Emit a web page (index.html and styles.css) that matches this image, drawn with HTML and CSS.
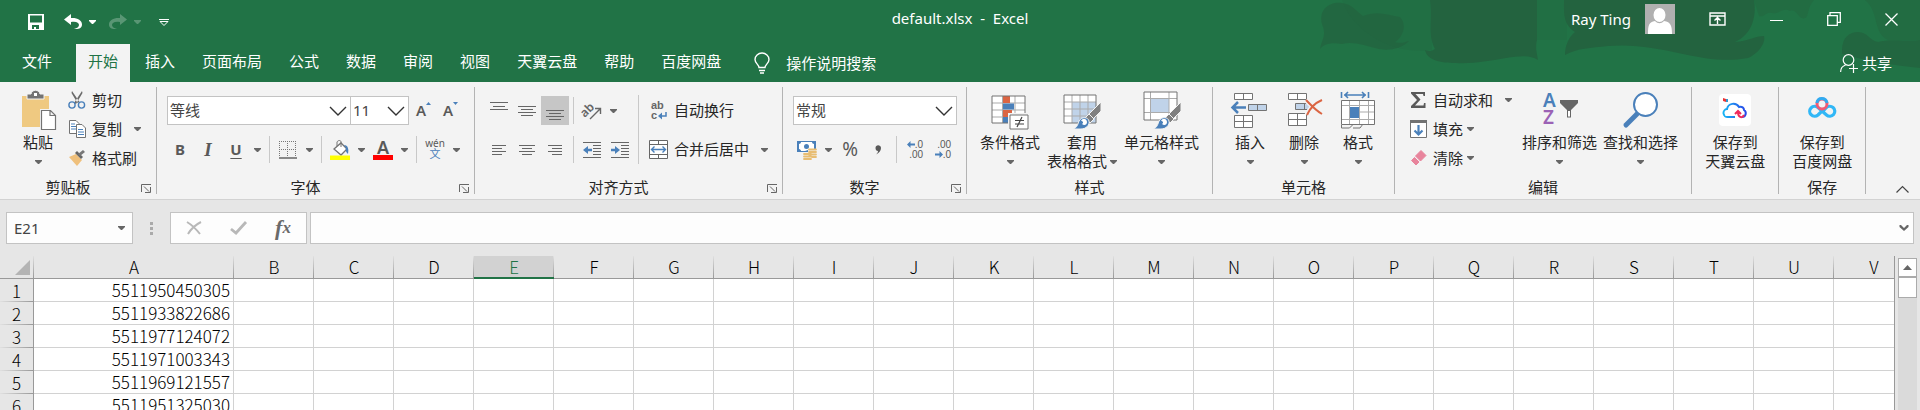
FILE: index.html
```html
<!DOCTYPE html>
<html lang="zh-CN">
<head>
<meta charset="utf-8">
<title>default.xlsx - Excel</title>
<link rel="stylesheet" href="styles.css">
</head>
<body>
<svg class="symbols" aria-hidden="true">
  <symbol id="caret" viewBox="0 0 7 4"><path d="M0 0h7v1L4 4H3L0 1z" fill="currentColor"/></symbol>
  <symbol id="chevron" viewBox="0 0 18 10"><path d="M1 1l8 8 8-8" fill="none" stroke="#333" stroke-width="1.4"/></symbol>
  <symbol id="launcher" viewBox="0 0 10 9"><path d="M.5 8V.5H10M3 2.500l5 5M9.500 3v5.500H4" fill="none" stroke="#666"/></symbol>
  <symbol id="brush" viewBox="0 0 28 28"><path d="M28 0v9l-8 8-5-4z" fill="#808080" stroke="#f3f3f3"/><path d="M16 12l5 5-4 4-5-5z" fill="#808080" stroke="#f3f3f3"/><path d="M0 27c4-1 5-5 6-8 3-5 9-4 10 0s-3 8-8 8z" fill="#4a80ba" stroke="#f3f3f3"/><path d="M8 19c2-4 6-2 6 1s-3 4-5 2c2-1 1-3-1-3z" fill="#fff"/></symbol>
</svg>

<header class="top">
  <svg class="art" viewBox="0 0 640 82" aria-hidden="true">
    <g fill="#23633f">
      <path opacity=".7" d="M40 49c2-10 6-13 3-22C36 8 52 1 62 3c10 1 14 8 21 13 14-6 26-1 37 1 8 9 2 21-5 25 8 2 9 0 14-1-8 8-20 10-30 8-14-3-25-8-37-5-11-2-18 0-22 5z"/>
      <path d="M145 50c4 2 7 1 10-1-8-15-2-30-5-49h107v40c-2 9 0 13 1 20-8-5-18-4-32-2-18 3-33 6-50 5-16 0-29-3-31-13z"/>
      <path d="M284 0h190c3 18-3 35-19 42 13-1 20-6 29-6 2 7-6 18-16 22-22 4-42 1-65-4-28-6-48-10-75-8-18 2-30 2-43 9 0-10 4-18 10-23-12-8-11-18-11-32z"/>
      <path opacity=".8" d="M562 50c0-13 8-18 16-18 10 0 12 9 20 10 12-4 30 0 42-2v28c-30-3-52-7-78-14z"/>
      <path opacity=".45" d="M474 0h60c-7 7-5 17-9 18-6 3-8-10-15-7-7-4-12 4-18 2s-8 5-13 3zM585 0h55v40h-32c-16-8-8-27-23-40z"/>
      <path opacity=".25" d="M62 0h90v50c-40 6-80-20-90-50zM257 0h30v40h-30z"/>
    </g>
  </svg>
  <div class="titlebar">
    <div class="qat">
      <button class="icon-btn" aria-label="保存"><svg width="16" height="16" viewBox="0 0 16 16"><path fill="#fff" fill-rule="evenodd" d="M0 0h16v16H0zM2 1.500v7h12v-7zM4 11v4h2v-2h2v2h3v-4z"/></svg></button>
      <button class="icon-btn undo" aria-label="撤消"><svg width="18" height="16" viewBox="0 0 18 16"><path d="M7 0L0 5.500 7 11V8c5-1 8 .5 8 3 0 2-2 3-5 4 5 .5 8-1 8-4.500C18 6 13 3.500 7 4z" fill="#fff"/></svg><svg class="caret light" width="7" height="4"><use href="#caret"/></svg></button>
      <button class="icon-btn redo" aria-label="恢复" disabled><svg width="18" height="16" viewBox="0 0 18 16"><path d="M11 0l7 5.500L11 11V8c-5-1-8 .5-8 3 0 2 2 3 5 4-5 .5-8-1-8-4.500C0 6 5 3.500 11 4z" fill="#fff"/></svg><svg class="caret light" width="7" height="4"><use href="#caret"/></svg></button>
      <button class="icon-btn customize" aria-label="自定义快速访问工具栏"><svg width="10" height="7" viewBox="0 0 10 7"><path d="M0 .5h10M1 2.500h8L5 6.500z" fill="none" stroke="#fff"/></svg></button>
    </div>
    <h1 class="doc-title">default.xlsx&nbsp; -&nbsp; Excel</h1>
    <div class="window-tools">
      <span class="user">Ray Ting</span>
      <svg class="avatar" width="30" height="30" viewBox="0 0 30 30" role="img" aria-label="用户头像"><path fill="#b0b0b0" d="M0 0h30v30H0z"/><ellipse cx="14.500" cy="11" rx="6" ry="7" fill="#fff"/><path d="M3 30c0-9 1-12 7-13 3 3 6 3 9 0 7 1 8 5 8 13z" fill="#fff"/></svg>
      <button class="icon-btn" aria-label="功能区显示选项"><svg width="17" height="14" viewBox="0 0 17 14"><path d="M1 1h15v12H1zM1 4h15M8.500 12V6M5.500 8.500l3-3 3 3" fill="none" stroke="#fff" stroke-width="1.400"/></svg></button>
      <button class="icon-btn" aria-label="最小化"><svg width="13" height="13" viewBox="0 0 13 13"><path d="M0 7.500h13" stroke="#fff"/></svg></button>
      <button class="icon-btn" aria-label="向下还原"><svg width="14" height="14" viewBox="0 0 14 14"><path d="M.7 3.700h9.600v9.600H.7zM3 3.500V.7h10.300v9.600H10.500" fill="none" stroke="#fff" stroke-width="1.300"/></svg></button>
      <button class="icon-btn" aria-label="关闭"><svg width="13" height="13" viewBox="0 0 13 13"><path d="M.5.5l12 12M12.500.5l-12 12" stroke="#fff" stroke-width="1.300"/></svg></button>
    </div>
  </div>
  <nav class="tabs">
    <a class="tab tab-file" href="#">文件</a>
    <a class="tab active" href="#" aria-current="page">开始</a>
    <a class="tab" href="#">插入</a>
    <a class="tab" href="#">页面布局</a>
    <a class="tab" href="#">公式</a>
    <a class="tab" href="#">数据</a>
    <a class="tab" href="#">审阅</a>
    <a class="tab" href="#">视图</a>
    <a class="tab" href="#">天翼云盘</a>
    <a class="tab" href="#">帮助</a>
    <a class="tab" href="#">百度网盘</a>
    <a class="tab tell-me" href="#"><svg width="16" height="21" viewBox="0 0 16 21"><path d="M5 14.500c0-3-4-4-4-8a7 6.500 0 0 1 14 0c0 4-4 5-4 8zM5 17.500h6M6 20h4" fill="none" stroke="#fff" stroke-width="1.400"/></svg>操作说明搜索</a>
    <a class="tab share" href="#"><svg width="18" height="19" viewBox="0 0 18 19"><circle cx="8.500" cy="6" r="5.300" fill="none" stroke="#fff" stroke-width="1.200"/><path d="M.6 18c0-4 2-6 5-7M9 14.500h9M13.500 10v9" fill="none" stroke="#fff" stroke-width="1.200"/></svg>共享</a>
  </nav>
</header>

<main class="ribbon">
  <section class="group clipboard">
    <div class="body">
      <button class="large paste"><svg width="36" height="40" viewBox="0 0 36 40"><path d="M2 6h27v31H2z" fill="#efc981"/><path d="M7 9V4h4c1-5 8-5 9 0h4v5z" fill="#737373" stroke="#f3f3f3"/><path d="M14 3h3v3h-3z" fill="#fff"/><path d="M20 19h11l5 5v15H20z" fill="#f3f3f3"/><path d="M21.500 20.500h9l5 5v14h-14zM30 20.500v5h5" fill="#fff" stroke="#737373" stroke-width="1.200"/></svg><span>粘贴</span><svg class="caret" width="7" height="4"><use href="#caret"/></svg></button>
      <div class="stack">
        <button class="small"><svg width="18" height="18" viewBox="0 0 18 18"><path d="M4 0l7.500 11-2 1L3.500 2zM14 0L6 12l2 1 6.500-11z" fill="#6a6a6a"/><circle cx="4" cy="14" r="3.100" fill="none" stroke="#4a80ba" stroke-width="1.400"/><circle cx="13.500" cy="14" r="3.100" fill="none" stroke="#4a80ba" stroke-width="1.400"/></svg>剪切</button>
        <button class="small wide"><svg width="18" height="18" viewBox="0 0 18 18"><path d="M1.500.5H8l3 3v10H1.500z" fill="#fff" stroke="#737373"/><path d="M8.500 4.500H14l3.500 3.500v9.500h-9z" fill="#fff" stroke="#737373"/><path d="M3 4h4M3 6.500h5M3 9h5M10 9.500h5M10 12h6M10 14.500h6" stroke="#4a80ba"/></svg>复制<svg class="caret" width="7" height="4"><use href="#caret"/></svg></button>
        <button class="small"><svg width="18" height="18" viewBox="0 0 18 18"><path d="M1 8l7-3 6 6-5 6z" fill="#efc07c"/><path d="M7 4l2-2 6 6-2 2z" fill="#666"/><path d="M10 5l5-4 2 2-5 4z" fill="#777"/></svg>格式刷</button>
      </div>
    </div>
    <div class="caption"><h2>剪贴板</h2><button class="launcher" aria-label="剪贴板设置"><svg width="10" height="9"><use href="#launcher"/></svg></button></div>
  </section>

  <section class="group font">
    <div class="body rows">
      <div class="row">
        <div class="combo combo-font"><select aria-label="字体"><option>等线</option></select><svg width="18" height="10"><use href="#chevron"/></svg></div>
        <div class="combo combo-size"><select aria-label="字号"><option>11</option></select><svg width="18" height="10"><use href="#chevron"/></svg></div>
        <button class="tool grow" aria-label="增大字号"><span class="letter">A</span><svg width="5" height="3" viewBox="0 0 5 3"><path d="M0 3L2.500 0 5 3z" fill="#4a80ba"/></svg></button>
        <button class="tool grow" aria-label="减小字号"><span class="letter">A</span><svg width="5" height="3" viewBox="0 0 5 3"><path d="M0 0l2.500 3L5 0z" fill="#4a80ba"/></svg></button>
      </div>
      <div class="row">
        <button class="tool bold" aria-label="加粗">B</button>
        <button class="tool italic" aria-label="倾斜">I</button>
        <button class="tool underline" aria-label="下划线">U</button>
        <button class="drop" aria-label="下划线选项"><svg class="caret" width="7" height="4"><use href="#caret"/></svg></button>
        <i class="sep"></i>
        <button class="tool" aria-label="边框"><svg width="18" height="18" viewBox="0 0 18 18"><path d="M0 .5h18M0 8.500h18M.5 0v16M8.500 0v16M16.500 0v16" stroke="#777" stroke-dasharray="1 1" fill="none"/><path d="M0 17h18" stroke="#666" stroke-width="1.500"/></svg></button>
        <button class="drop" aria-label="边框选项"><svg class="caret" width="7" height="4"><use href="#caret"/></svg></button>
        <i class="sep"></i>
        <button class="tool" aria-label="填充颜色"><svg width="20" height="20" viewBox="0 0 20 20"><path d="M4 9l7-6 6 6-6 6z" fill="#fff" stroke="#737373" stroke-width="1.300"/><path d="M7 6V2c1-2 4-2 4 0v5" fill="none" stroke="#737373"/><path d="M14 5c4 0 5 4 4 9-1-1-3-3-2-6z" fill="#4a80ba"/><path d="M0 15.500h20V20H0z" fill="#ff0"/></svg></button>
        <button class="drop" aria-label="填充颜色选项"><svg class="caret" width="7" height="4"><use href="#caret"/></svg></button>
        <button class="tool font-color" aria-label="字体颜色"><span>A</span></button>
        <button class="drop" aria-label="字体颜色选项"><svg class="caret" width="7" height="4"><use href="#caret"/></svg></button>
        <i class="sep"></i>
        <button class="tool pinyin" aria-label="拼音"><span>wén</span><span class="han">文</span></button>
        <button class="drop" aria-label="拼音选项"><svg class="caret" width="7" height="4"><use href="#caret"/></svg></button>
      </div>
    </div>
    <div class="caption"><h2>字体</h2><button class="launcher" aria-label="字体设置"><svg width="10" height="9"><use href="#launcher"/></svg></button></div>
  </section>

  <section class="group align">
    <div class="body">
      <div class="rows">
        <div class="row">
          <button class="tool" aria-label="顶端对齐"><svg width="18" height="18" viewBox="0 0 18 18"><path d="M0 .5h18M3 4.500h12M0 7.500h18" stroke="#666"/></svg></button>
          <button class="tool" aria-label="垂直居中"><svg width="18" height="18" viewBox="0 0 18 18"><path d="M0 4.500h18M3 7.500h12M0 10.500h18M3 13.500h12" stroke="#666"/></svg></button>
          <button class="tool pressed" aria-label="底端对齐" aria-pressed="true"><svg width="18" height="18" viewBox="0 0 18 18"><path d="M0 8.500h18M3 11.500h12M0 14.500h18M3 17.500h12" stroke="#666"/></svg></button>
          <i class="sep"></i>
          <button class="tool" aria-label="方向"><svg width="20" height="18" viewBox="0 0 20 18"><text class="svg-ab" transform="rotate(-45 7 9)" x="-1" y="11">ab</text><path d="M8 17L18 7M13 6.500h5.500V12" fill="none" stroke="#666" stroke-width="1.400"/></svg></button>
          <button class="drop" aria-label="方向选项"><svg class="caret" width="7" height="4"><use href="#caret"/></svg></button>
        </div>
        <div class="row">
          <button class="tool" aria-label="左对齐"><svg width="16" height="12" viewBox="0 0 16 12"><path d="M1 1.500h14M1 4.500h10M1 7.500h14M1 10.500h10" stroke="#666"/></svg></button>
          <button class="tool" aria-label="居中"><svg width="16" height="12" viewBox="0 0 16 12"><path d="M0 1.500h16M3 4.500h10M0 7.500h16M3 10.500h10" stroke="#666"/></svg></button>
          <button class="tool" aria-label="右对齐"><svg width="16" height="12" viewBox="0 0 16 12"><path d="M1 1.500h14M5 4.500h10M1 7.500h14M5 10.500h10" stroke="#666"/></svg></button>
          <i class="sep"></i>
          <button class="tool" aria-label="减少缩进量"><svg width="18" height="16" viewBox="0 0 18 16"><path d="M0 .5h18M10 3.500h8M10 6.500h8M10 9.500h8M10 12.500h8M0 15.500h18" stroke="#666"/><path d="M0 8l5-4v2.800h4v2.400H5V12z" fill="#4a80ba"/></svg></button>
          <button class="tool" aria-label="增加缩进量"><svg width="18" height="16" viewBox="0 0 18 16"><path d="M0 .5h18M10 3.500h8M10 6.500h8M10 9.500h8M10 12.500h8M0 15.500h18" stroke="#666"/><path d="M9 8L4 4v2.800H0v2.400h4V12z" fill="#4a80ba"/></svg></button>
        </div>
      </div>
      <i class="sep tall"></i>
      <div class="rows text-tools">
        <button class="row small"><svg width="19" height="19" viewBox="0 0 19 19"><text class="svg-abc" x="2" y="8">ab</text><text class="svg-abc" x="2" y="18">c</text><path d="M17 11v4h-4" fill="none" stroke="#4a80ba" stroke-width="1.500"/><path d="M9 15l4-3.500v7z" fill="#4a80ba"/></svg>自动换行</button>
        <button class="row small wide"><svg width="19" height="19" viewBox="0 0 19 19"><path d="M.5.500h18v18H.5z" fill="#fff" stroke="#666"/><path d="M0 4.500h19M0 14.500h19M9.500 0v4.500M9.500 14.500V19" stroke="#666"/><path d="M3 9.500h13M5.500 6.500l-3 3 3 3M13.500 6.500l3 3-3 3" fill="none" stroke="#4a80ba" stroke-width="1.400"/></svg>合并后居中<svg class="caret" width="7" height="4"><use href="#caret"/></svg></button>
      </div>
    </div>
    <div class="caption"><h2>对齐方式</h2><button class="launcher" aria-label="对齐设置"><svg width="10" height="9"><use href="#launcher"/></svg></button></div>
  </section>

  <section class="group number">
    <div class="body rows">
      <div class="row"><div class="combo combo-number"><select aria-label="数字格式"><option>常规</option></select><svg width="18" height="10"><use href="#chevron"/></svg></div></div>
      <div class="row">
        <button class="tool" aria-label="会计数字格式"><svg width="20" height="20" viewBox="0 0 20 20"><path d="M0 1h19v11H0z" fill="#4a80ba"/><path d="M2 4c1 0 2-1 2-2h11c0 1 1 2 2 2v5h-3l-6 2H4C4 10 3 9 2 9z" fill="#fff"/><circle cx="9.500" cy="6.500" r="2.500" fill="#4a80ba"/><path d="M11 9h8v8h-4v3H6v-7h5z" fill="#f3f3f3"/><path d="M12 9.500h7M12 12h7M12 14.500h7M15 17h4M7 14h7M7 16.500h7M7 19h7" stroke="#e8bd72" stroke-width="1.800" stroke-linecap="round"/></svg></button>
        <button class="drop" aria-label="会计格式选项"><svg class="caret" width="7" height="4"><use href="#caret"/></svg></button>
        <button class="tool percent" aria-label="百分比样式">%</button>
        <button class="tool comma" aria-label="千位分隔样式"><svg width="6" height="10" viewBox="0 0 6 10"><path d="M.5 3C.5-1 6-.5 6 3c0 3-2 5-5 6.500 1-1 2-2 2-3.500C1.500 6 .5 5 .5 3z" fill="#595959"/></svg></button>
        <i class="sep"></i>
        <button class="tool decimals" aria-label="增加小数位数"><span><svg width="8" height="7" viewBox="0 0 8 7"><path d="M0 3.500L3.500 0v2.500H8v2H3.500V7z" fill="#4a80ba"/></svg>.0</span><span>.00</span></button>
        <button class="tool decimals" aria-label="减少小数位数"><span>.00</span><span><svg width="8" height="7" viewBox="0 0 8 7"><path d="M8 3.500L4.500 0v2.500H0v2h4.500V7z" fill="#4a80ba"/></svg>.0</span></button>
      </div>
    </div>
    <div class="caption"><h2>数字</h2><button class="launcher" aria-label="数字设置"><svg width="10" height="9"><use href="#launcher"/></svg></button></div>
  </section>

  <section class="group styles">
    <div class="body">
      <button class="large"><svg width="38" height="40" viewBox="0 0 38 40"><path d="M1 6h33v27H1z" fill="#fff"/><path d="M1 13h33M1 20h33M1 27h33M11.500 6v27M24 6v27" stroke="#ababab"/><path d="M12 6h7v7h-7zM12 20h9v7h-9z" fill="#db6543"/><path d="M12 13.500h11v6H12zM12 27h7v6h-7z" fill="#4a80ba"/><path d="M1 6h33v27H1z" fill="none" stroke="#737373"/><path d="M17 23h21v17H17z" fill="#f3f3f3"/><path d="M19 25h18v14H19z" fill="#fff" stroke="#737373"/><path d="M24 30.500h9M24 34h9M31 27l-5 10" stroke="#444" stroke-width="1.200"/></svg><span>条件格式</span><svg class="caret" width="7" height="4"><use href="#caret"/></svg></button>
      <button class="large table-format"><svg width="38" height="40" viewBox="0 0 38 40"><path d="M1 5h32v28H1z" fill="#fff"/><path d="M9 12h24v21H9z" fill="#c0d3e9"/><path d="M1 12h32M1 19h32M1 26h32M9 5v28M17 5v28M25 5v28" stroke="#ababab"/><path d="M1 5h32v28H1z" fill="none" stroke="#737373"/><use href="#brush" x="10" y="12" width="28" height="28"/></svg><span>套用</span><span class="with-caret">表格格式<svg class="caret" width="7" height="4"><use href="#caret"/></svg></span></button>
      <button class="large"><svg width="38" height="40" viewBox="0 0 38 40"><path d="M1 2h33v28H1z" fill="#fff"/><path d="M8 9h18v13H8z" fill="#c0d3e9"/><path d="M1 8.500h33M1 22.500h33M7.500 2v28M26 2v28" stroke="#ababab"/><path d="M1 2h33v28H1z" fill="none" stroke="#737373"/><use href="#brush" x="10" y="12" width="28" height="28"/></svg><span>单元格样式</span><svg class="caret" width="7" height="4"><use href="#caret"/></svg></button>
    </div>
    <div class="caption"><h2>样式</h2></div>
  </section>

  <section class="group cells">
    <div class="body">
      <button class="large"><svg width="38" height="40" viewBox="0 0 38 40"><path d="M3.500 3.500h18v6h-18zM3.500 25.500h18v12h-18z" fill="#fff" stroke="#737373"/><path d="M12.500 3.500v6M12.500 25.500v12M3.500 31.500h18" stroke="#737373"/><path d="M17.500 14.500h18v6h-18zM26.500 14.500v6" fill="#c0d3e9" stroke="#737373"/><path d="M2 17.500h13M7 12l-5.500 5.500L7 23" fill="none" stroke="#4a80ba" stroke-width="2.500"/></svg><span>插入</span><svg class="caret" width="7" height="4"><use href="#caret"/></svg></button>
      <button class="large"><svg width="38" height="40" viewBox="0 0 38 40"><path d="M3.500 3.500h18v6h-18zM3.500 23.500h18v12h-18z" fill="#fff" stroke="#737373"/><path d="M12.500 3.500v6M12.500 23.500v12M3.500 29.500h18" stroke="#737373"/><path d="M10.500 13.500h16v6h-16zM19.500 13.500v6" fill="#c0d3e9" stroke="#737373"/><path d="M21 10c5 5 9 10 16 14M37 10c-7 3-12 8-15 15" fill="none" stroke="#f3f3f3" stroke-width="5"/><path d="M21 10c5 5 9 10 16 14M37 10c-7 3-12 8-15 15" fill="none" stroke="#db6543" stroke-width="2"/></svg><span>删除</span><svg class="caret" width="7" height="4"><use href="#caret"/></svg></button>
      <button class="large"><svg width="38" height="40" viewBox="0 0 38 40"><path d="M2.500 2v6M29.500 2v6M5 5h22M9 2L6 5l3 3M23 2l3 3-3 3" fill="none" stroke="#4a80ba" stroke-width="1.600"/><path d="M2.500 10.500h33v24h-33z" fill="#fff"/><path d="M2.500 15.500h33M2.500 29.500h33M10.500 10v24M20.500 10v24M29.500 10v24M20 22h16" stroke="#ababab"/><path d="M11 17h9v11h-9z" fill="#4a80ba"/><path d="M2.500 10.500h33v24h-33zM2.500 35v3h8l3-3M14 38h7l3-4" fill="none" stroke="#737373"/></svg><span>格式</span><svg class="caret" width="7" height="4"><use href="#caret"/></svg></button>
    </div>
    <div class="caption"><h2>单元格</h2></div>
  </section>

  <section class="group editing">
    <div class="body">
      <div class="stack">
        <button class="small wide"><svg width="18" height="18" viewBox="0 0 18 18"><path d="M2 1h14v4h-1.500L14 3H6.500l5 5.500L6 14.500h8.500L15 12h1.500v5H2v-2l6-6-6-6.500z" fill="#595959"/></svg>自动求和<svg class="caret" width="7" height="4"><use href="#caret"/></svg></button>
        <button class="small"><svg width="18" height="18" viewBox="0 0 18 18"><path d="M1.500 1.500h16v16h-16z" fill="#fff" stroke="#737373"/><path d="M1 0h17v3H1z" fill="#737373"/><path d="M9.500 5v10M5.500 10.500l4 4 4-4" fill="none" stroke="#4a80ba" stroke-width="2.200"/></svg>填充<svg class="caret" width="7" height="4"><use href="#caret"/></svg></button>
        <button class="small"><svg width="18" height="18" viewBox="0 0 18 18"><path d="M6.500 7L12 1.500l5 5L11.500 12z" fill="#e8849c" stroke="#e8849c" stroke-linejoin="round"/><path d="M5.500 8.500l4.500 4.500-3 3-4.500-4.500z" fill="#e8849c" stroke="#e8849c" stroke-linejoin="round"/></svg>清除<svg class="caret" width="7" height="4"><use href="#caret"/></svg></button>
      </div>
      <button class="large"><svg width="38" height="40" viewBox="0 0 38 40"><text class="svg-a" x="2" y="17">A</text><text class="svg-z" x="2" y="34">Z</text><path d="M19 10h18v3l-7 7v7.500h-4V20l-7-7z" fill="#666"/><path d="M28 21v5.500" stroke="#fff" stroke-width="2"/></svg><span>排序和筛选</span><svg class="caret" width="7" height="4"><use href="#caret"/></svg></button>
      <button class="large"><svg width="38" height="40" viewBox="0 0 38 40"><path d="M15 24L4 35" stroke="#4a80ba" stroke-width="5" stroke-linecap="round"/><circle cx="23.500" cy="14.500" r="11.500" fill="#fff" stroke="#4a80ba" stroke-width="2"/></svg><span>查找和选择</span><svg class="caret" width="7" height="4"><use href="#caret"/></svg></button>
    </div>
    <div class="caption"><h2>编辑</h2></div>
  </section>

  <section class="group cloud">
    <div class="body">
      <button class="large"><svg width="38" height="40" viewBox="0 0 38 40"><rect x="3" y="4" width="32" height="32" rx="4" fill="#fff"/><path d="M7 8l3 1v3l-3-1z" fill="#e33"/><path d="M10 9h2v3h-2z" fill="#39c"/><defs><linearGradient id="sky"><stop offset="0" stop-color="#17b5f5"/><stop offset="1" stop-color="#2746e8"/></linearGradient></defs><path d="M19 27h-7a4 4 0 0 1-1-8c1-6 9-7 12-2 3-1 5 1 5 3 3 2 2 7-2 7" fill="none" stroke="url(#sky)" stroke-width="2"/><path d="M28 25c-2 4-6 2-6-3M19 24l3-3 3 3" fill="none" stroke="#ef2a5c" stroke-width="2"/></svg><span>保存到</span><span>天翼云盘</span></button>
    </div>
    <div class="caption"></div>
  </section>

  <section class="group cloud">
    <div class="body">
      <button class="large"><svg width="38" height="40" viewBox="0 0 38 40"><path d="M18 22l-3 3a5 5 0 1 1 0-7.500l8.500 7.500A5 5 0 1 0 23 18l-3 3" fill="none" stroke="#31b7f6" stroke-width="3.200"/><circle cx="19" cy="14" r="5" fill="none" stroke="#f25a74" stroke-width="3"/><path d="M14 13c0-6 9-6 10 0" fill="none" stroke="#31aaf0" stroke-width="3"/></svg><span>保存到</span><span>百度网盘</span></button>
    </div>
    <div class="caption"><h2>保存</h2></div>
  </section>

  <button class="collapse" aria-label="折叠功能区"><svg width="13" height="7" viewBox="0 0 13 7"><path d="M.5 6.500l6-6 6 6" fill="none" stroke="#444" stroke-width="1.200"/></svg></button>
</main>

<section class="formula-bar">
  <div class="combo name-box"><input type="text" value="E21" aria-label="名称框"><svg class="caret" width="7" height="4"><use href="#caret"/></svg></div>
  <svg class="grip" width="3" height="13" viewBox="0 0 3 13"><path d="M0 0h3v3H0zM0 5h3v3H0zM0 10h3v3H0z" fill="#aaa"/></svg>
  <div class="fx-box">
    <button class="tool" aria-label="取消"><svg width="16" height="14" viewBox="0 0 16 14"><path d="M1 1c5 3 9 7 13 12M15 1C9 4 5 8 2 13" fill="none" stroke="#b8b8b8" stroke-width="2"/></svg></button>
    <button class="tool" aria-label="输入"><svg width="18" height="14" viewBox="0 0 18 14"><path d="M1 8l5 4L16 1" fill="none" stroke="#b8b8b8" stroke-width="2.800"/></svg></button>
    <button class="tool fx" aria-label="插入函数">f<small>x</small></button>
  </div>
  <div class="combo formula"><input type="text" aria-label="编辑栏"><svg width="10" height="6" viewBox="0 0 10 6"><path d="M.5 0v2L5 6l4.500-4V0H8L5 3 2 0z" fill="#666"/></svg></div>
</section>

<section class="sheet">
  <div class="grid-wrap">
    <table class="grid">
      <colgroup id="cols"><col class="col-head"><col class="col-a"></colgroup>
      <thead><tr id="head"><th class="corner" aria-label="全选"><svg width="15" height="15" viewBox="0 0 15 15"><path d="M15 0v15H0z" fill="#b4b4b4"/></svg></th></tr></thead>
      <tbody id="rows"></tbody>
    </table>
  </div>
  <div class="scrollbar"><button aria-label="向上滚动"><svg width="9" height="5" viewBox="0 0 9 5"><path d="M0 5l4.500-5L9 5z" fill="#666"/></svg></button><div class="thumb"></div></div>
</section>
<script src="grid.js"></script>
</body>
</html>
```

FILE: styles.css
```css
* { box-sizing: border-box; }

body {
  margin: 0;
  height: 100vh;
  display: flex;
  flex-direction: column;
  overflow: hidden;
  background: #e6e6e6;
  color: #262626;
  font: 15px/19px "Noto Sans", "Noto Sans CJK SC", sans-serif;
}

button, select, input {
  margin: 0;
  padding: 0;
  border: 0;
  background: none;
  color: inherit;
  font: inherit;
}

svg { display: block; flex: none; overflow: visible; }
h1, h2 { margin: 0; font: inherit; }
.symbols { position: absolute; width: 0; height: 0; }
.caret { color: #666; }
.caret.light { color: #fff; }

/* Title bar and tabs */
.top {
  flex: none;
  position: relative;
  background: #217346;
  color: #fff;
}
.art {
  position: absolute;
  top: 0;
  right: 0;
  width: 640px;
  height: 82px;
}
.titlebar {
  position: relative;
  height: 44px;
  display: grid;
  grid-template-columns: 1fr auto 1fr;
}
.qat { display: flex; align-items: center; padding-left: 28px; }
.icon-btn { display: flex; align-items: center; gap: 7px; }
.undo { margin-left: 20px; }
.redo { margin-left: 13px; opacity: .25; }
.customize { margin-left: 18px; }
.doc-title { line-height: 36px; }
.window-tools {
  height: 38px;
  display: flex;
  align-items: center;
  justify-content: flex-end;
  padding-right: 22px;
  gap: 44px;
}
.user { margin-right: -30px; }
.avatar { margin-right: -10px; }

.tabs { position: relative; display: flex; gap: 3px; }
.tab {
  height: 38px;
  padding: 0 12px;
  color: #fff;
  line-height: 34px;
  text-decoration: none;
  white-space: nowrap;
}
.tab-file { padding: 0 21px 0 22px; }
.active { background: #f3f3f3; color: #217346; }
.tell-me { display: flex; align-items: center; gap: 16px; padding-left: 18px; }
.share { display: flex; align-items: center; gap: 4px; margin-left: auto; padding-right: 28px; }

/* Ribbon */
.ribbon {
  flex: none;
  display: flex;
  padding: 5px 0;
  background: #f3f3f3;
  border-bottom: 1px solid #d2d2d2;
}
.group {
  flex: none;
  height: 107px;
  display: flex;
  flex-direction: column;
  justify-content: space-between;
  border-right: 1px solid #b3b3b3;
}
.body { display: flex; }
.clipboard .body { padding: 0 11px 0 20px; gap: 12px; }
.font .body { padding: 9px 10px 0 9px; }
.align .body { padding: 0 10px; }
.number .body { padding: 9px 9px 0 10px; }
.styles .body { padding: 0 13px; gap: 7px; }
.cells .body { padding: 0 17px 0 18px; gap: 16px; }
.editing .body { padding: 0 13px 0 14px; gap: 6px; }
.cloud .body { padding: 0 13px; }

.caption { display: flex; height: 13px; line-height: 13px; }
.caption h2 { flex: 1; text-align: center; }
.launcher { width: 20px; display: flex; align-items: flex-end; padding-left: 5px; padding-bottom: 1px; }

.large {
  display: flex;
  flex-direction: column;
  align-items: center;
  padding-top: 4px;
  white-space: nowrap;
}
.large > svg:first-child { margin: -1px 0 3px; }
.large > .caret { margin-top: 8px; }
.with-caret { display: flex; align-items: center; gap: 3px; }

.stack { display: flex; flex-direction: column; gap: 3px; }
.small {
  height: 26px;
  display: flex;
  align-items: center;
  gap: 6px;
  white-space: nowrap;
}
.small .caret { margin: 0 4px 0 -2px; }
.wide .caret { margin-left: 6px; }

.rows { display: flex; flex-direction: column; gap: 10px; }
.row { height: 29px; display: flex; align-items: center; }
.align .rows { padding-top: 9px; }
.align .text-tools { padding-left: 6px; }
.sep { width: 1px; height: 27px; margin: 0 4px; background: #c8c8c8; }
.tall { height: 69px; margin-top: 8px; }

.tool {
  width: 28px;
  height: 29px;
  display: flex;
  align-items: center;
  justify-content: center;
  color: #595959;
}
.drop { width: 15px; height: 29px; display: flex; align-items: center; justify-content: center; }
.pressed { background: #c6c6c6; }
.bold, .italic, .underline { font-weight: 700; }
.italic { font: italic 700 19px "Liberation Serif", serif; }
.underline { text-decoration: underline; text-underline-offset: 3px; }
.grow { width: 27px; font-weight: 600; }
.grow svg { align-self: flex-start; margin-top: 6px; }
.font-color span {
  width: 20px;
  height: 20px;
  border-bottom: 5px solid red;
  font-weight: 600;
  font-size: 18px;
  line-height: 14px;
}
.pinyin { flex-direction: column; font-size: 10px; line-height: 9px; }
.pinyin .han { color: #4a80ba; font-size: 11px; line-height: 12px; }
.percent { font-size: 19px; }
.decimals {
  flex-direction: column;
  align-items: flex-end;
  padding-right: 6px;
  font-family: "Liberation Sans", sans-serif;
  font-size: 10px;
  line-height: 10px;
}
.decimals span { display: flex; align-items: center; }
.svg-ab { font: 600 12px "Noto Sans", sans-serif; fill: #666; }
.svg-abc { font: 700 11px "Liberation Sans", sans-serif; fill: #666; }
.svg-a { font: 600 19px "Noto Sans", sans-serif; fill: #4a80ba; }
.svg-z { font: 600 19px "Noto Sans", sans-serif; fill: #9b62b5; }

/* Boxes with an arrow laid over the right end */
.combo {
  display: grid;
  align-items: center;
  height: 29px;
  background: #fff;
  border: 1px solid #c3c3c3;
}
.combo > * { grid-area: 1 / 1; }
.combo svg { justify-self: end; margin-right: 3px; pointer-events: none; }
.combo select, .combo input {
  appearance: none;
  width: 100%;
  height: 100%;
  padding-left: 2px;
  color: #444;
}
.combo-font { width: 184px; margin-left: 1px; }
.combo-size { width: 59px; margin: 0 1px 0 -1px; }
.combo-number { width: 164px; }

.collapse { margin: 0 11px 1px auto; align-self: flex-end; }

/* Formula bar */
.formula-bar { flex: none; display: flex; align-items: center; padding: 12px 6px; }
.formula-bar .combo, .fx-box { height: 32px; background: #fdfdfd; border: 1px solid #c3c3c3; }
.name-box { width: 127px; }
.formula-bar .name-box input { padding-left: 7px; }
.formula-bar .name-box svg { margin-right: 7px; }
.grip { margin: 0 17px; }
.fx-box { width: 137px; display: flex; align-items: center; justify-content: space-between; padding: 0 9px; }
.fx { font: italic 700 22px/24px "Liberation Serif", serif; color: #6a6a6a; }
.fx small { font-size: 17px; }
.formula { flex: 1; margin-left: 3px; }
.formula-bar .formula svg { margin-right: 4px; }

/* Sheet */
.sheet { flex: 1; min-height: 0; display: flex; }
.grid-wrap {
  flex: 1;
  min-width: 0;
  overflow: hidden;
  border-right: 1px solid #999;
}
.grid {
  width: max-content;
  table-layout: fixed;
  border-collapse: separate;
  border-spacing: 0;
  background: #fff;
  color: #000;
  font: 300 17px/22px "Noto Sans CJK SC", sans-serif;
}
.col-head { width: 34px; }
.col-a { width: 200px; }
.col { width: 80px; }
.grid th, .grid td { height: 23px; padding: 0; font-weight: 300; }
.grid td {
  padding-right: 3px;
  text-align: right;
  border-right: 1px solid #d2d2d2;
  border-bottom: 1px solid #d2d2d2;
}
.grid thead th {
  border-bottom: 1px solid #999;
  background: linear-gradient(#e0e0e0, #999) right / 1px 100% no-repeat #e6e6e6;
}
.grid tbody th {
  border-right: 1px solid #999;
  background: linear-gradient(90deg, #e0e0e0, #999) bottom / 100% 1px no-repeat #e6e6e6;
}
.grid thead .selected {
  background-color: #d2d2d2;
  border-bottom-color: #217346;
  box-shadow: inset 0 -1px #217346;
  color: #217346;
}
.corner svg { margin-left: 15px; }

.scrollbar {
  flex: none;
  width: 19px;
  margin: 2px 3px 0 3px;
  background: #dadada;
}
.scrollbar button {
  width: 19px;
  height: 19px;
  display: flex;
  align-items: center;
  justify-content: center;
  background: #fff;
  border: 1px solid #ababab;
}
.thumb { height: 21px; background: #fff; border: 1px solid #ababab; }
```

FILE: grid.js
```js
const letters = 'ABCDEFGHIJKLMNOPQRSTUV'.split('');
const values = ['5511950450305', '5511933822686', '5511977124072', '5511971003343', '5511969121557', '5511951325030'];
const selected = 'E';

const cols = document.getElementById('cols');
const head = document.getElementById('head');
const rows = document.getElementById('rows');

letters.forEach((letter, i) => {
  if (i > 0) {
    const col = document.createElement('col');
    col.className = 'col';
    cols.append(col);
  }
  const th = document.createElement('th');
  th.scope = 'col';
  th.textContent = letter;
  if (letter === selected) th.className = 'selected';
  head.append(th);
});

values.forEach((value, i) => {
  const tr = rows.insertRow();
  const th = document.createElement('th');
  th.scope = 'row';
  th.textContent = i + 1;
  tr.append(th);
  letters.forEach((letter, c) => {
    tr.insertCell().textContent = c === 0 ? value : '';
  });
});
```
